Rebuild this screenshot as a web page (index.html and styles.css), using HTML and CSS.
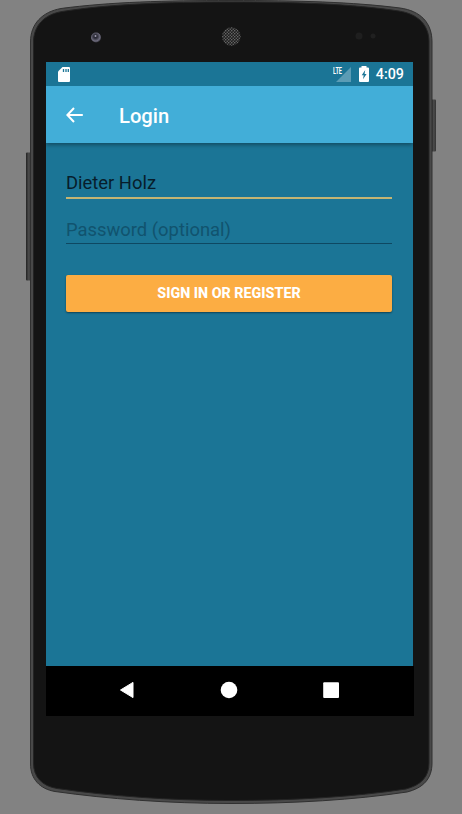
FILE: index.html
```html
<!DOCTYPE html>
<html lang="en">
<head>
<meta charset="utf-8">
<title>Login</title>
<link rel="stylesheet" href="styles.css">
</head>
<body>
<div class="stage">
  <svg class="device" viewBox="0 0 462 814" aria-hidden="true">
    <defs>
      <linearGradient id="key" x1="0" x2="1" y1="0" y2="0">
        <stop offset="0" stop-color="#222"/><stop offset=".55" stop-color="#4c4c4c"/><stop offset="1" stop-color="#333"/>
      </linearGradient>
      <radialGradient id="lens" cx=".45" cy=".4" r=".6">
        <stop offset="0" stop-color="#1c1c28"/><stop offset=".35" stop-color="#34343f"/><stop offset=".75" stop-color="#6d6b7c"/><stop offset="1" stop-color="#3b3a45"/>
      </radialGradient>
      <pattern id="mesh" width="3" height="3" patternUnits="userSpaceOnUse">
        <rect width="3" height="3" fill="#1d1d1d"/>
        <circle cx=".75" cy=".75" r=".75" fill="#777"/><circle cx="2.25" cy="2.25" r=".75" fill="#6a6a6a"/>
      </pattern>
    </defs>
    <rect x="26" y="152.500" width="5" height="128" rx="1" fill="url(#key)"/>
    <rect x="431" y="99.500" width="5" height="52" rx="1" fill="url(#key)"/>
    <path class="rim" d="M30.500 42C30.500 24 42 12 61 8.500C110 2 165 .5 231 .5S353 2 400 8C421 11 432 23 432 42V763C432 779 423 788 407 792C354 800 293 803.500 231 803.500S108 799 55 791.500C40 789 30.500 779 30.500 764Z"/>
    <path class="face" d="M33.500 42C33.500 26 44 14.500 62 11.500C110 4 165 2 231 2S352 4 399 11C418 14 429 25 429 42V763C429 777 421 785 406 789C354 797 293 800.500 231 800.500S109 796 57 788.500C42 786 33.500 777 33.500 763Z"/>
    <circle cx="96" cy="37.500" r="5" fill="url(#lens)"/>
    <circle cx="95.500" cy="36" r="1" fill="#a09db0"/>
    <circle cx="231.300" cy="36.500" r="9.300" fill="url(#mesh)"/>
    <circle cx="359" cy="36" r="3.500" fill="#1f1f1f"/>
    <circle cx="373" cy="36" r="2.500" fill="#202020"/>
  </svg>

  <main class="screen">
    <div class="status">
      <svg class="sd" viewBox="0 0 12 15"><path fill="#fff" d="M4.500 0H11a1 1 0 0 1 1 1v13a1 1 0 0 1-1 1H1a1 1 0 0 1-1-1V4.500Z"/><path d="M5.500 2v3M8 2v3M10.300 2v3" stroke="#1b7596" stroke-width="1.300"/></svg>
      <div class="signal">
        <span class="lte">LTE</span>
        <svg viewBox="0 0 15 15"><path d="M15 0V15H0Z" fill="#5b9cb5"/></svg>
      </div>
      <svg class="battery" viewBox="0 0 10 16"><path fill="#fff" d="M2.500 0h5v1.500H9a1 1 0 0 1 1 1V15a1 1 0 0 1-1 1H1a1 1 0 0 1-1-1V2.500a1 1 0 0 1 1-1h1.500Z"/><path fill="#1b7596" d="M6.200 4 2.700 9.300h2L4 13.300l3.600-5.400H5.600Z"/></svg>
      <span class="clock">4:09</span>
    </div>
    <header class="toolbar">
      <svg class="back" viewBox="0 0 17 16"><path d="M8 1 1.400 8 8 15M1.600 8H16.800" fill="none" stroke="#fff" stroke-width="2"/></svg>
      <h1 class="title">Login</h1>
    </header>
    <form class="form">
      <div class="field focused">Dieter Holz</div>
      <div class="field hint">Password (optional)</div>
      <button class="submit" type="button">SIGN IN OR REGISTER</button>
    </form>
    <nav class="nav">
      <svg viewBox="0 0 18 18"><path d="M2.500 9 15 1.400V16.600Z" fill="#fff" stroke="#fff" stroke-linejoin="round"/></svg>
      <svg viewBox="0 0 18 18"><circle cx="9" cy="9" r="8.300" fill="#fff"/></svg>
      <svg viewBox="0 0 18 18"><rect x="1.200" y="1.200" width="15.800" height="15.800" rx="1" fill="#fff"/></svg>
    </nav>
  </main>
</div>
</body>
</html>
```

FILE: styles.css
```css
* { box-sizing: border-box; }
body { margin: 0; background: #828282; font-family: Roboto, sans-serif; }
.stage { position: relative; width: 462px; height: 814px; padding: 62px 48px 98px 46px; overflow: hidden; }
.device { position: absolute; inset: 0; width: 462px; height: 814px; }
.rim { fill: #484848; stroke: #303030; stroke-width: 1; }
.face { fill: #141414; stroke: #242424; stroke-width: 1; }
svg { display: block; flex: none; }

.screen { position: relative; display: flex; flex-direction: column; width: 368px; height: 654px; }
.status, .toolbar, .form { width: 367px; }
.status { display: flex; align-items: center; height: 24px; padding: 0 9px 0 12px; background: #1b7596; color: #fff; }
.sd { width: 12px; height: 15px; }
.signal { display: flex; align-items: flex-start; width: 18px; height: 15px; margin-left: auto; }
.signal svg { width: 15px; height: 15px; margin-left: -11px; }
.lte { width: 14px; font-size: 9px; font-weight: 700; line-height: 8px; transform: scaleX(.62); transform-origin: left; position: relative; z-index: 1; }
.battery { width: 10px; height: 16px; margin: 0 7px 0 8px; }
.clock { font-size: 14.300px; font-weight: 500; line-height: 24px; }

.toolbar { position: relative; display: flex; align-items: center; height: 57px; padding: 1px 20px 0; background: #42aed8; color: #fff; box-shadow: 0 2px 4px rgba(0, 0, 0, .35); clip-path: inset(0 0 -8px 0); }
.back { width: 17px; height: 16px; }
.title { margin: 1px 0 0 36px; font-size: 20.200px; font-weight: 500; line-height: 28px; }

.form { flex: 1; padding: 26px 21px 0 20px; background: #1b7596; }
.field { height: 30px; font-size: 18.400px; line-height: 28px; color: #071d2b; }
.focused { border-bottom: 2px solid #c4b573; }
.hint { height: 28px; margin-top: 17px; color: #11536e; border-bottom: 1px solid #0e4862; }
.submit { display: block; width: 100%; height: 37px; margin: 30.500px 0 0; padding: 0; border: 0; border-radius: 2px; background: #fcad43; color: #fff; font: 800 14.300px/36px Roboto, sans-serif; box-shadow: 0 1px 2px rgba(0, 0, 0, .45); }

.nav { display: flex; align-items: center; justify-content: center; gap: 84px; height: 50px; padding: 0 2px 2px 0; background: #000; }
.nav svg { width: 18px; height: 18px; }
```
